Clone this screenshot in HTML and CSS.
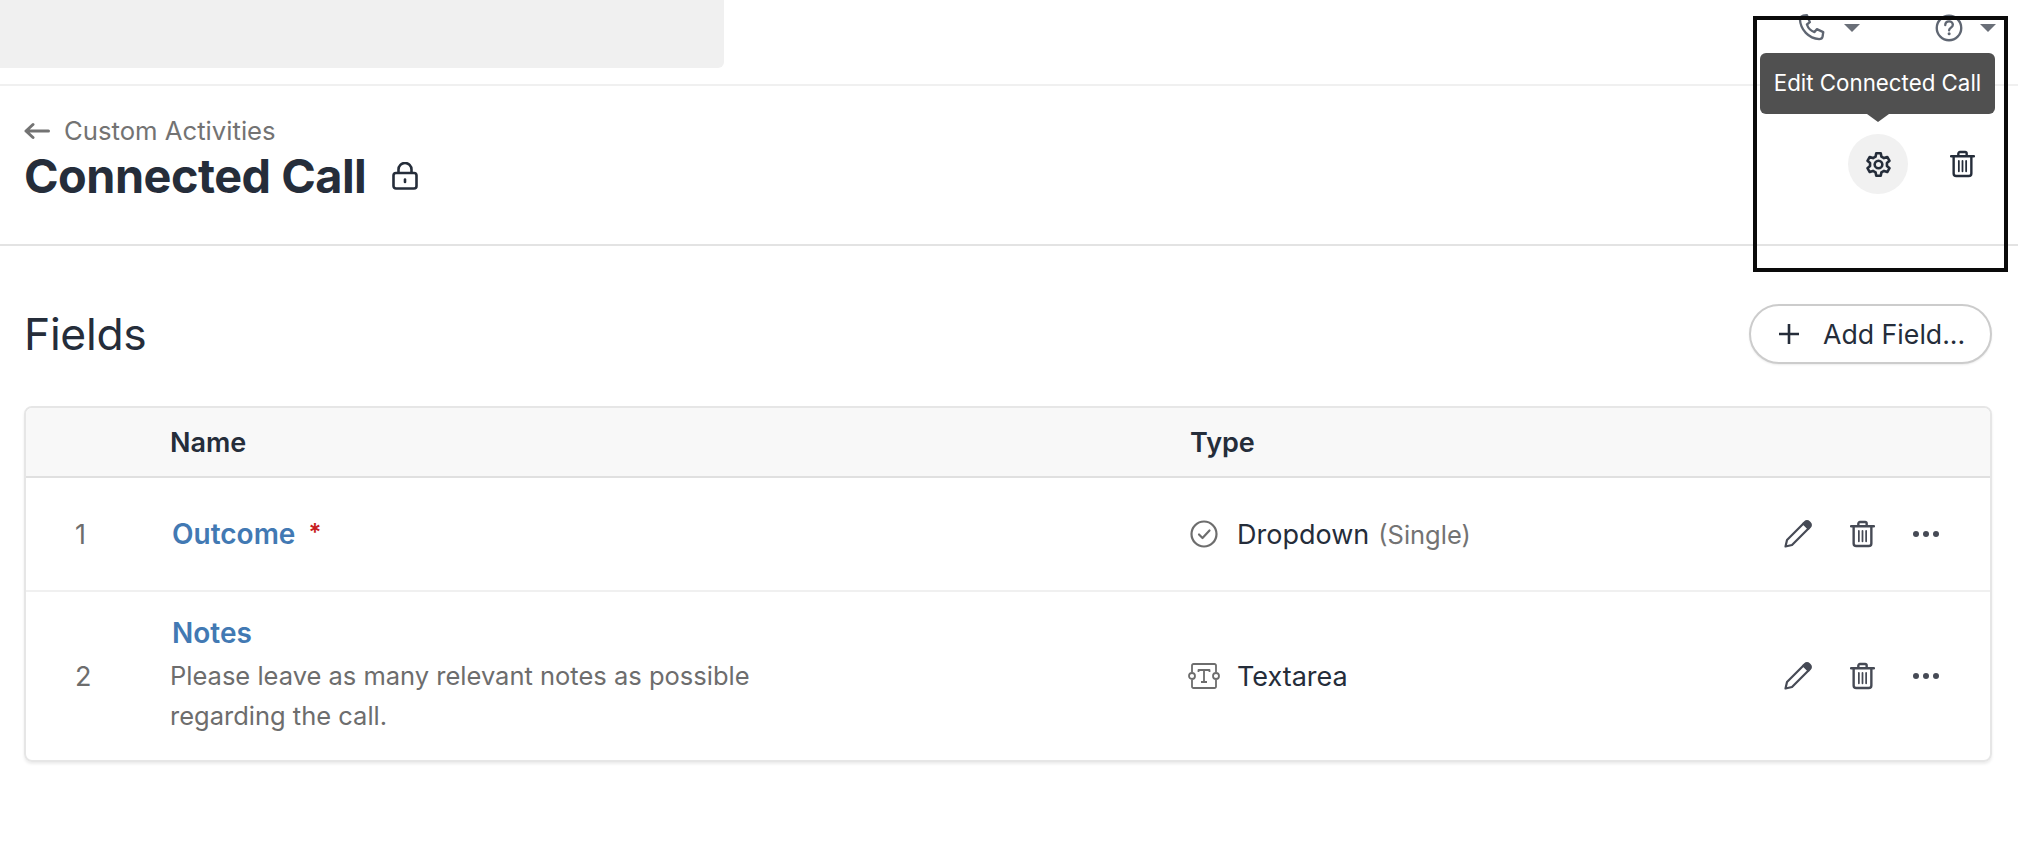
FILE: index.html
```html
<!DOCTYPE html>
<html lang="en">
<head>
  <meta charset="UTF-8" />
  <title>Connected Call</title>
  <link rel="stylesheet" href="styles.css">
</head>
<body>
  <div class="topbar">
    <div class="search-box"></div>
    <div class="top-icons">
      <svg class="top-icon" viewBox="0 0 24 24" fill="none" stroke="#5f6672" stroke-width="2" stroke-linejoin="round"><path d="M5 1.500 8.500 1 11 7 8.500 9c1 3 3.500 5.500 6.500 6.500l2-2.500 5.500 2.500-.5 3.500c-.3 1.500-1.500 2.500-3 2.500C10 21 3 13.500 2.500 4.500 2.500 3 3.500 2 5 1.500Z"/></svg>
      <span class="caret"></span>
      <svg class="top-icon help" viewBox="0 0 24 24" fill="none" stroke="#5f6672" stroke-width="2"><circle cx="12" cy="12" r="10.500"/><path d="M8.800 9.500c0-2 1.500-3.200 3.300-3.200s3.200 1.200 3.200 2.900c0 2.400-3.200 2.500-3.200 4.800" stroke-linecap="round"/><circle cx="12.100" cy="17" r="1.300" fill="#5f6672" stroke="none"/></svg>
      <span class="caret caret-last"></span>
    </div>
  </div>

  <header class="page-head">
    <div class="head-left">
      <a class="back-link">
        <svg class="back-arrow" viewBox="0 0 26 18" fill="none" stroke="#737373" stroke-width="3" stroke-linecap="round" stroke-linejoin="round"><path d="M2 9H24.500M9 2.500 2 9l7 6.500"/></svg>
        Custom Activities
      </a>
      <h1>Connected Call
        <svg class="lock" viewBox="0 0 26 28" fill="none" stroke="#252d3a" stroke-width="2.600" stroke-linejoin="round"><rect x="1.500" y="11" width="23" height="15.500" rx="2.500"/><path d="M6.500 11V7.500a6.500 6.500 0 0 1 13 0V11"/><path d="M13 17.500v2.500" stroke-linecap="round"/></svg>
      </h1>
    </div>
    <div class="head-actions">
      <div class="circle-btn">
        <div class="tooltip">Edit Connected Call</div>
        <svg class="gear" viewBox="0 0 24 24" fill="none" stroke="#252d3a" stroke-width="2.300" stroke-linejoin="round"><path d="M10 2h4l.6 3 2.300 1.300 2.900-1 2 3.400-2.300 2v2.600l2.300 2-2 3.400-2.900-1-2.300 1.300-.6 3h-4l-.6-3-2.300-1.300-2.900 1-2-3.400 2.300-2v-2.600l-2.300-2 2-3.400 2.900 1L9.400 5Z"/><circle cx="12" cy="12" r="3.400"/></svg>
      </div>
      <svg class="trash head-trash" viewBox="0 0 24 26" fill="none" stroke="#252d3a" stroke-width="2.300" stroke-linejoin="round" stroke-linecap="round"><path d="M1 5.500h22M8 5.500V3a1.500 1.500 0 0 1 1.500-1.500h5A1.500 1.500 0 0 1 16 3v2.500M3.500 5.500V22a2.500 2.500 0 0 0 2.500 2.500h12a2.500 2.500 0 0 0 2.500-2.500V5.500"/><path d="M8.500 10v10M12 10v10M15.500 10v10" stroke-width="1.700"/></svg>
    </div>
  </header>

  <main class="content">
    <div class="section-head">
      <h2>Fields</h2>
      <button class="add-btn">
        <svg class="plus" viewBox="0 0 22 22" fill="none" stroke="#252d3a" stroke-width="2.600"><path d="M11 1v20M1 11h20"/></svg>
        Add Field...
      </button>
    </div>

    <div class="fields-card">
      <div class="row row-head">
        <div class="col-num"></div>
        <div class="col-name">Name</div>
        <div class="col-type">Type</div>
      </div>

      <div class="row row-one">
        <div class="col-num">1</div>
        <div class="col-name"><a class="field-link">Outcome</a><span class="req">*</span></div>
        <div class="col-type">
          <svg class="type-icon" viewBox="0 0 28 28" fill="none" stroke="#6d6d6d" stroke-width="2.200" stroke-linecap="round" stroke-linejoin="round"><circle cx="14" cy="14" r="12.500"/><path d="m9 14.500 3.500 3.500 7-7.500"/></svg>
          <span>Dropdown</span><span class="muted">(Single)</span>
        </div>
        <div class="col-actions">
          <svg class="pencil" viewBox="0 0 28 28" fill="none" stroke="#464a55" stroke-width="2.200" stroke-linejoin="round"><path d="M1.500 26.500 3 20 19.500 3.500l5 5L8 25Z"/><path d="M19.500 3.500 21 2a2.800 2.800 0 0 1 4 0l1 1a2.800 2.800 0 0 1 0 4L24.500 8.500Z" fill="#464a55"/></svg>
          <svg class="trash" viewBox="0 0 24 26" fill="none" stroke="#464a55" stroke-width="2.300" stroke-linejoin="round" stroke-linecap="round"><path d="M1 5.500h22M8 5.500V3a1.500 1.500 0 0 1 1.500-1.500h5A1.500 1.500 0 0 1 16 3v2.500M3.500 5.500V22a2.500 2.500 0 0 0 2.500 2.500h12a2.500 2.500 0 0 0 2.500-2.500V5.500"/><path d="M8.500 10v10M12 10v10M15.500 10v10" stroke-width="1.700"/></svg>
          <svg class="dots" viewBox="0 0 26 6" fill="#464a55"><circle cx="3" cy="3" r="3"/><circle cx="13" cy="3" r="3"/><circle cx="23" cy="3" r="3"/></svg>
        </div>
      </div>

      <div class="row row-two">
        <div class="col-num">2</div>
        <div class="col-name">
          <a class="field-link">Notes</a>
          <p class="field-desc">Please leave as many relevant notes as possible regarding the call.</p>
        </div>
        <div class="col-type">
          <svg class="type-icon textarea-icon" viewBox="0 0 32 28" fill="none" stroke="#6d6d6d" stroke-width="1.800" stroke-linejoin="round"><path d="M4 10V3.500A1.500 1.500 0 0 1 5.500 2h21A1.500 1.500 0 0 1 28 3.500V10M28 18v6.500a1.500 1.500 0 0 1-1.500 1.500h-21A1.500 1.500 0 0 1 4 24.500V18"/><circle cx="4" cy="14" r="3"/><circle cx="28" cy="14" r="3"/><path d="M10.500 10V8h11v2M16 8v12M13 20h6"/></svg>
          <span>Textarea</span>
        </div>
        <div class="col-actions">
          <svg class="pencil" viewBox="0 0 28 28" fill="none" stroke="#464a55" stroke-width="2.200" stroke-linejoin="round"><path d="M1.500 26.500 3 20 19.500 3.500l5 5L8 25Z"/><path d="M19.500 3.500 21 2a2.800 2.800 0 0 1 4 0l1 1a2.800 2.800 0 0 1 0 4L24.500 8.500Z" fill="#464a55"/></svg>
          <svg class="trash" viewBox="0 0 24 26" fill="none" stroke="#464a55" stroke-width="2.300" stroke-linejoin="round" stroke-linecap="round"><path d="M1 5.500h22M8 5.500V3a1.500 1.500 0 0 1 1.500-1.500h5A1.500 1.500 0 0 1 16 3v2.500M3.500 5.500V22a2.500 2.500 0 0 0 2.500 2.500h12a2.500 2.500 0 0 0 2.500-2.500V5.500"/><path d="M8.500 10v10M12 10v10M15.500 10v10" stroke-width="1.700"/></svg>
          <svg class="dots" viewBox="0 0 26 6" fill="#464a55"><circle cx="3" cy="3" r="3"/><circle cx="13" cy="3" r="3"/><circle cx="23" cy="3" r="3"/></svg>
        </div>
      </div>
    </div>
  </main>

  <div class="highlight-box"></div>
</body>
</html>
```

FILE: styles.css
```css
* {
  box-sizing: border-box;
}
html, body {
  height: 100%;
}
body {
  margin: 0;
  background: white;
  color: #252d3a;
  font-family: Inter, "Liberation Sans", sans-serif;
  font-size: 27px;
  overflow: hidden;
}

/* top strip */
.topbar {
  height: 86px;
  display: flex;
  justify-content: space-between;
  border-bottom: 2px solid #f0f0f0;
}
.search-box {
  width: 724px;
  height: 68px;
  background: #f0f0f0;
  border-bottom-right-radius: 6px;
}
.top-icons {
  display: flex;
  align-items: flex-start;
  height: 28px;
  margin-top: 14px;
  padding-right: 22px;
}
.top-icon {
  width: 28px;
  height: 28px;
}
.top-icon.help {
  margin-left: 75px;
}
.caret {
  width: 0;
  height: 0;
  margin: 10px 0 0 19px;
  border-left: 8px solid transparent;
  border-right: 8px solid transparent;
  border-top: 8px solid #6a6f78;
}
.caret-last {
  margin-left: 17px;
}

/* title area */
.page-head {
  height: 160px;
  display: flex;
  justify-content: space-between;
  padding: 30px 43px 0 24px;
  border-bottom: 2px solid #e3e3e3;
}
.back-link {
  display: flex;
  align-items: center;
  gap: 14px;
  color: #737373;
  font-size: 25.7px;
  line-height: 30px;
}
.back-arrow {
  width: 26px;
  height: 18px;
}
h1 {
  display: flex;
  align-items: center;
  gap: 26px;
  margin: 2px 0 0;
  font-size: 46.8px;
  line-height: 56px;
  letter-spacing: -0.5px;
  font-weight: 700;
}
.lock {
  width: 26px;
  height: 28px;
}
.head-actions {
  display: flex;
  align-items: flex-start;
  gap: 42px;
  padding-top: 18px;
}
.circle-btn {
  position: relative;
  width: 60px;
  height: 60px;
  border-radius: 50%;
  background: #f1f1f1;
  display: flex;
  align-items: center;
  justify-content: center;
}
.gear {
  width: 27px;
  height: 27px;
}
.head-trash {
  margin-top: 16px;
}
.trash {
  width: 25px;
  height: 28px;
}
.tooltip {
  position: absolute;
  bottom: 80px;
  left: -88px;
  width: 235px;
  height: 61px;
  line-height: 60px;
  text-align: center;
  font-size: 22.3px;
  color: white;
  background: #505050;
  border-radius: 6px;
  white-space: nowrap;
}
.tooltip::after {
  content: "";
  position: absolute;
  top: 100%;
  left: 107px;
  border-left: 11px solid transparent;
  border-right: 11px solid transparent;
  border-top: 8px solid #505050;
}

/* fields */
.content {
  padding: 0 26px 0 24px;
}
.section-head {
  display: flex;
  justify-content: space-between;
  align-items: center;
  height: 60px;
  margin-top: 58px;
}
h2 {
  margin: 0;
  font-size: 44.4px;
  font-weight: 400;
  letter-spacing: -0.3px;
}
.add-btn {
  width: 243px;
  height: 60px;
  border: 2px solid #cccccc;
  border-radius: 30px;
  background: white;
  color: #252d3a;
  font: inherit;
  font-size: 26.7px;
  display: flex;
  align-items: center;
  gap: 23px;
  padding: 0 0 0 27px;
  box-shadow: 0 1px 2px rgba(0,0,0,0.08);
}
.plus {
  width: 22px;
  height: 22px;
}
.fields-card {
  margin-top: 42px;
  border: 2px solid #e6e6e6;
  border-radius: 8px;
  box-shadow: 0 2px 3px rgba(0,0,0,0.08);
  overflow: hidden;
}
.row {
  display: flex;
  align-items: center;
}
.row-head {
  height: 70px;
  background: #f8f8f8;
  border-bottom: 2px solid #e0e0e0;
  font-weight: 600;
}
.row-one {
  height: 114px;
  border-bottom: 2px solid #f0f0f0;
}
.row-two {
  height: 168px;
}
.col-num {
  width: 144px;
  padding-left: 49px;
  color: #6d6d6d;
}
.col-name {
  width: 1020px;
}
.col-type {
  flex: 1;
  display: flex;
  align-items: center;
}
.field-link {
  margin-left: 2px;
  color: #4279b3;
  font-size: 28px;
  font-weight: 600;
}
.req {
  margin-left: 13px;
  color: #c71f1f;
  font-size: 24px;
  font-weight: 600;
  vertical-align: 3px;
}
.field-desc {
  width: 600px;
  margin: 6px 0 0;
  color: #6d6d6d;
  font-size: 25.5px;
  line-height: 40px;
}
.type-icon {
  width: 28px;
  height: 28px;
  margin-right: 19px;
}
.textarea-icon {
  width: 32px;
  margin: 0 17px 0 -2px;
}
.muted {
  margin-left: 9px;
  color: #737373;
  font-size: 25.5px;
}
.col-actions {
  display: flex;
  align-items: center;
  gap: 38px;
  padding-right: 51px;
}
.pencil {
  width: 28px;
  height: 28px;
}
.dots {
  width: 26px;
  height: 6px;
}

/* annotation rectangle drawn over the screenshot */
.highlight-box {
  position: absolute;
  left: 1753px;
  top: 16px;
  width: 255px;
  height: 256px;
  border: 4px solid #0a0a0a;
}
```
